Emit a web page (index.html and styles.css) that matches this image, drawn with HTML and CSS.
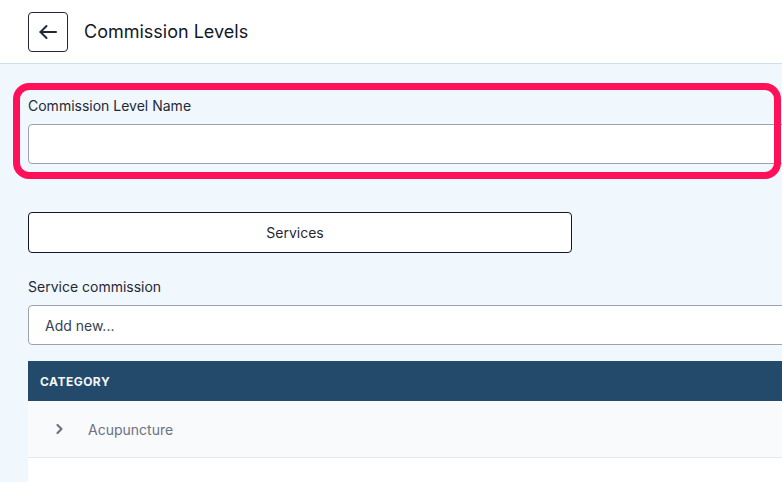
FILE: index.html
```html
<!DOCTYPE html>
<html lang="en">
<head>
  <meta charset="UTF-8">
  <meta name="viewport" content="width=device-width, initial-scale=1.0">
  <title>Commission Levels</title>
  <link rel="stylesheet" href="styles.css">
</head>
<body>
  <header class="topbar">
    <button class="back-btn" type="button" aria-label="Back">
      <svg width="20" height="20" viewBox="0 0 20 20" fill="none" stroke="currentColor" stroke-width="2" stroke-linecap="round" stroke-linejoin="round">
        <path d="M18 10H2.5"/>
        <path d="M8.5 4l-6 6 6 6"/>
      </svg>
    </button>
    <h1>Commission Levels</h1>
  </header>

  <main class="content">
    <div class="field">
      <label for="levelName">Commission Level Name</label>
      <input type="text" id="levelName">
    </div>

    <button class="tab-btn" type="button">Services</button>

    <div class="field">
      <label for="serviceCommission">Service commission</label>
      <input type="text" id="serviceCommission" placeholder="Add new...">
    </div>

    <div class="table">
      <div class="table-head">Category</div>
      <div class="table-row">
        <svg class="chevron" width="12" height="12" viewBox="0 0 12 12" fill="none" stroke="currentColor" stroke-width="2.2" stroke-linecap="round" stroke-linejoin="round">
          <path d="M3.5 2l4 4-4 4"/>
        </svg>
        <span>Acupuncture</span>
      </div>
      <div class="table-row empty"></div>
    </div>

    <div class="highlight"></div>
  </main>
</body>
</html>
```

FILE: styles.css
```css
html, body {
  overflow: hidden;
}

body {
  font-family: Inter, "Noto Sans", sans-serif;
  background-color: #f0f7fd;
  margin: 0;
  color: #1f2937;
}

.topbar {
  height: 63px;
  background-color: #fff;
  border-bottom: 1px solid #cfdfee;
  display: flex;
  align-items: center;
  padding-left: 28px;
  gap: 16px;
}

.back-btn {
  width: 40px;
  height: 40px;
  border: 1px solid #1f2937;
  border-radius: 4px;
  background: #fff;
  color: #1f2937;
  display: flex;
  align-items: center;
  justify-content: center;
  padding: 0;
}

.topbar h1 {
  font-size: 18px;
  font-weight: 400;
  color: #111827;
  margin: 0;
}

.content {
  position: relative;
  width: 1200px;
  padding: 32px 0 0 28px;
}

.field {
  display: flex;
  flex-direction: column;
  gap: 8px;
}

.field label {
  font-size: 14px;
  line-height: 20px;
  color: #1f2937;
}

.field input {
  height: 40px;
  box-sizing: border-box;
  border: 1px solid #9ca3af;
  border-radius: 4px;
  background: #fff;
  padding: 0 16px;
  font-family: inherit;
  font-size: 14px;
  color: #1f2937;
}

.field input::placeholder {
  color: #374151;
}

.tab-btn {
  display: block;
  width: 544px;
  height: 41px;
  margin: 48px 0 24px;
  padding: 0 10px 0 0;
  background: #fff;
  border: 1px solid #111827;
  border-radius: 4px;
  font-family: inherit;
  font-size: 14px;
  color: #1f2937;
}

.table {
  margin-top: 16px;
  background: #fff;
}

.table-head {
  height: 40px;
  display: flex;
  align-items: center;
  padding-left: 12px;
  background-color: #234a6b;
  color: #f3f6f9;
  font-size: 12px;
  font-weight: 700;
  letter-spacing: 0.04em;
  text-transform: uppercase;
}

.table-row {
  height: 56px;
  display: flex;
  align-items: center;
  gap: 22px;
  padding-left: 26px;
  background-color: #f8fafc;
  border-bottom: 1px solid #e5e7eb;
  font-size: 14px;
  color: #6b7280;
}

.table-row.empty {
  background-color: #fff;
  border-bottom: none;
}

.chevron {
  color: #6b7280;
}

.highlight {
  position: absolute;
  left: 13px;
  top: 19px;
  width: 768px;
  height: 96px;
  box-sizing: border-box;
  border: 7px solid #ff1159;
  border-radius: 16px;
  pointer-events: none;
}
```
